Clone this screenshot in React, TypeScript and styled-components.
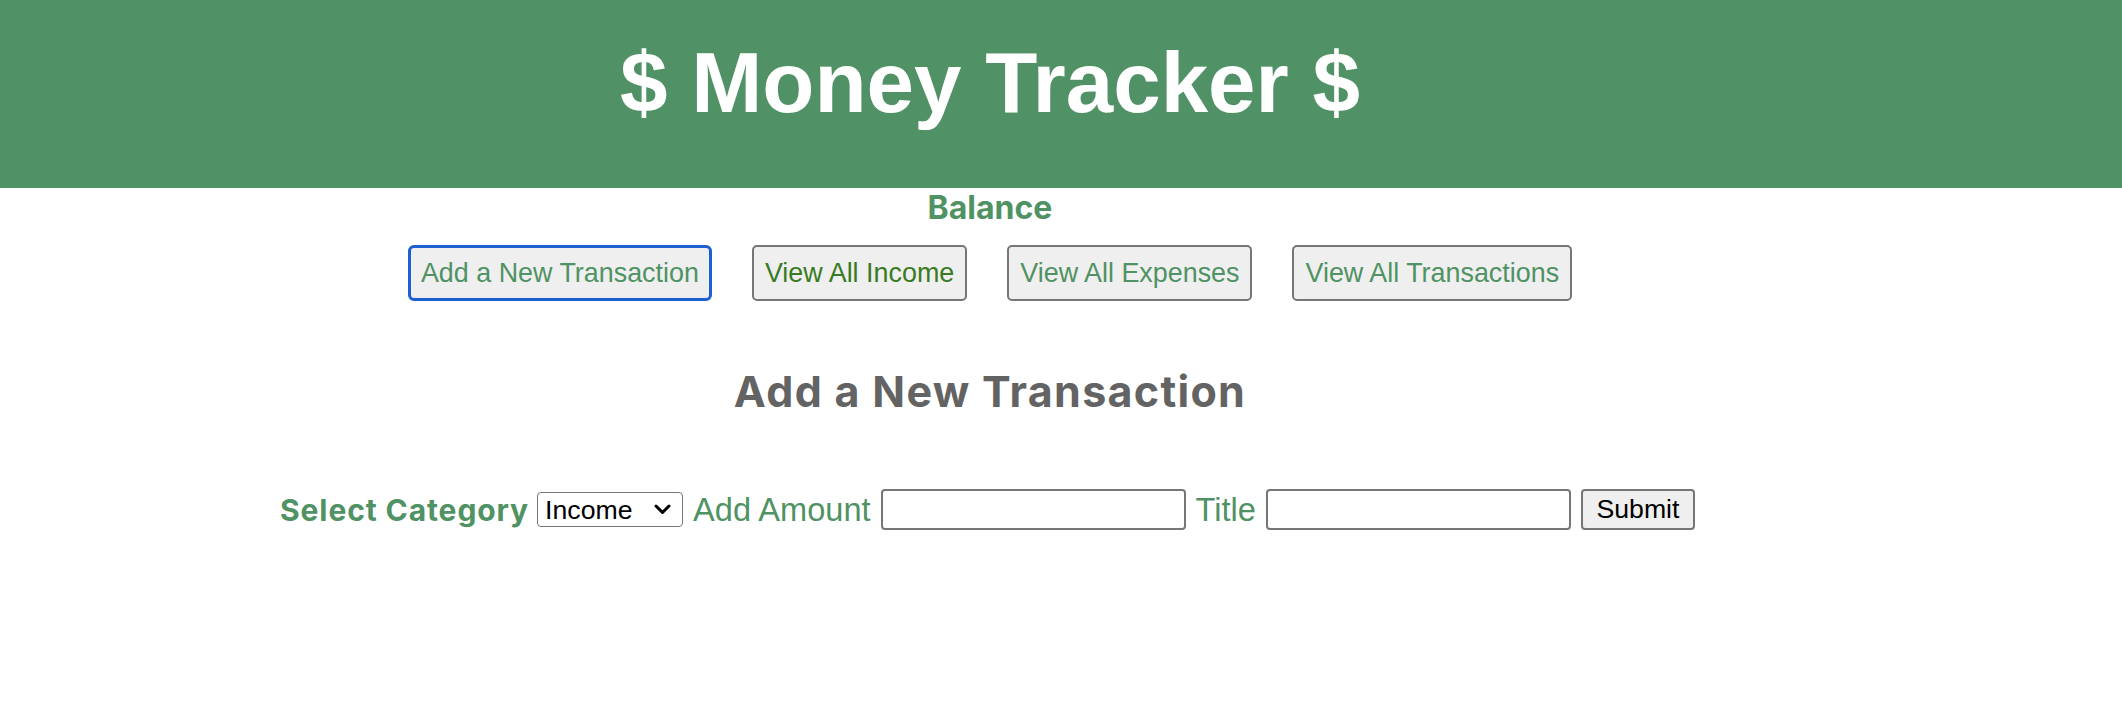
import React from "react";
import styled, { createGlobalStyle } from "styled-components";

const GlobalStyle = createGlobalStyle`
  html, body {
    margin: 0;
    padding: 0;
    background: #ffffff;
    font-family: "Liberation Sans", Arial, sans-serif;
  }
  * { box-sizing: border-box; }
`;

const GREEN = "#4f9264";

const Header = styled.header`
  background: #509266;
  height: 188px;
  padding-top: 34px;
`;

const Column = styled.div`
  width: 1980px;
  display: flex;
  flex-direction: column;
  align-items: center;
`;

const Title = styled.h1`
  margin: 0;
  font-family: "Liberation Sans", Arial, sans-serif;
  font-weight: 700;
  font-size: 85.33px;
  line-height: normal;
  color: #ffffff;
  text-align: center;
`;

const Balance = styled.h3`
  margin: 0;
  font-family: Inter, "Noto Sans", sans-serif;
  font-weight: 700;
  font-size: 32px;
  line-height: normal;
  color: ${GREEN};
`;

const Nav = styled.nav`
  margin-top: 18px;
  display: flex;
  gap: 40px;
`;

const NavButton = styled.button<{ $active?: boolean; $tone?: string }>`
  height: 56px;
  padding: 0 ${(p) => (p.$active ? "10px" : "11px")};
  border: ${(p) => (p.$active ? "3px solid #1c5fd0" : "2px solid #767676")};
  border-radius: ${(p) => (p.$active ? "6px" : "5px")};
  background: #efefef;
  color: ${(p) => p.$tone || GREEN};
  font-family: "Liberation Sans", Arial, sans-serif;
  font-size: 26.9px;
  cursor: pointer;
`;

const Heading = styled.h2`
  margin: 64px 0 0;
  font-family: Inter, "Noto Sans", sans-serif;
  font-weight: 700;
  font-size: 43px;
  letter-spacing: 1.3px;
  line-height: normal;
  color: #636363;
`;

const Form = styled.form`
  margin-top: 72px;
  margin-right: 5px;
  display: flex;
  align-items: center;
  gap: 10px;
`;

const StrongLabel = styled.label`
  margin-right: -2px;
  font-family: Inter, "Noto Sans", sans-serif;
  font-weight: 700;
  font-size: 30px;
  letter-spacing: 0.9px;
  line-height: normal;
  color: ${GREEN};
  white-space: nowrap;
`;

const Label = styled.label`
  font-family: "Liberation Sans", Arial, sans-serif;
  font-size: 32.6px;
  line-height: normal;
  color: ${GREEN};
  white-space: nowrap;
`;

const SelectWrap = styled.div`
  position: relative;
  display: flex;
`;

const Select = styled.select`
  appearance: none;
  width: 146px;
  height: 35px;
  padding: 0 30px 0 7px;
  border: 1.5px solid #767676;
  border-radius: 4px;
  background: #ffffff;
  color: #000000;
  font-family: "Liberation Sans", Arial, sans-serif;
  font-size: 26.67px;
`;

const Chevron = styled.svg`
  position: absolute;
  right: 12px;
  top: 50%;
  width: 17px;
  height: 11px;
  margin-top: -6px;
  pointer-events: none;
`;

const TextInput = styled.input`
  width: 305px;
  height: 41px;
  padding: 0 6px;
  border: 2px solid #767676;
  border-radius: 4px;
  background: #ffffff;
  font-family: "Liberation Sans", Arial, sans-serif;
  font-size: 26.67px;
`;

const SubmitButton = styled.button`
  width: 114px;
  height: 41px;
  padding: 0;
  border: 2px solid #767676;
  border-radius: 4px;
  background: #efefef;
  color: #000000;
  font-family: "Liberation Sans", Arial, sans-serif;
  font-size: 26.67px;
`;

const navItems = [
  { label: "Add a New Transaction", active: true },
  { label: "View All Income", tone: "#387b23" },
  { label: "View All Expenses" },
  { label: "View All Transactions" },
];

export default function App() {
  return (
    <>
      <GlobalStyle />
      <Header>
        <Column>
          <Title>$ Money Tracker $</Title>
        </Column>
      </Header>
      <Column as="main">
        <Balance>Balance</Balance>
        <Nav>
          {navItems.map((item) => (
            <NavButton key={item.label} type="button" $active={item.active} $tone={item.tone}>
              {item.label}
            </NavButton>
          ))}
        </Nav>
        <Heading>Add a New Transaction</Heading>
        <Form onSubmit={(e) => e.preventDefault()}>
          <StrongLabel htmlFor="category">Select Category</StrongLabel>
          <SelectWrap>
            <Select id="category" defaultValue="income">
              <option value="income">Income</option>
              <option value="expense">Expense</option>
            </Select>
            <Chevron viewBox="0 0 17 11" aria-hidden="true">
              <path d="M2 2 L8.5 8.5 L15 2" fill="none" stroke="#000" strokeWidth="3" strokeLinecap="round" strokeLinejoin="round" />
            </Chevron>
          </SelectWrap>
          <Label htmlFor="amount">Add Amount</Label>
          <TextInput id="amount" type="number" />
          <Label htmlFor="title">Title</Label>
          <TextInput id="title" type="text" />
          <SubmitButton type="submit">Submit</SubmitButton>
        </Form>
      </Column>
    </>
  );
}
